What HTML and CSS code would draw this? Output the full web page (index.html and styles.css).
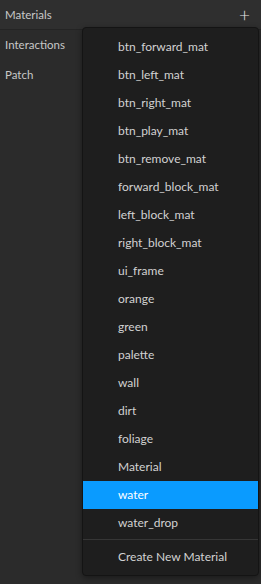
FILE: index.html
```html
<!DOCTYPE html>
<html lang="en">
<head>
    <meta charset="UTF-8">
    <title>Materials</title>
    <link rel="stylesheet" href="styles.css">
</head>
<body>
    <div class="panel">
        <div class="header">
            <span>Materials</span>
            <span class="add">+</span>
        </div>
        <div class="side">
            <div class="side-item">Interactions</div>
            <div class="side-item">Patch</div>
        </div>

        <ul class="menu">
            <li>btn_forward_mat</li>
            <li>btn_left_mat</li>
            <li>btn_right_mat</li>
            <li>btn_play_mat</li>
            <li>btn_remove_mat</li>
            <li>forward_block_mat</li>
            <li>left_block_mat</li>
            <li>right_block_mat</li>
            <li>ui_frame</li>
            <li>orange</li>
            <li>green</li>
            <li>palette</li>
            <li>wall</li>
            <li>dirt</li>
            <li>foliage</li>
            <li>Material</li>
            <li class="selected">water</li>
            <li>water_drop</li>
            <li class="sep"></li>
            <li>Create New Material</li>
        </ul>
    </div>
</body>
</html>
```

FILE: styles.css
```css
html, body {
    margin: 0;
    height: 100%;
}
body {
    background: #2b2b2b;
    font-family: Lato, "Noto Sans", sans-serif;
    font-size: 11.5px;
    color: #c8c8c8;
    overflow: hidden;
}
.panel {
    position: relative;
    height: 100%;
}
.header {
    display: flex;
    justify-content: space-between;
    align-items: center;
    height: 29px;
    padding: 0 11px 0 5px;
    background: #2f2f2f;
    border-bottom: 1px solid #242424;
}
.add {
    font-size: 19px;
    font-weight: 300;
    color: #e8e8e8;
}
.side-item {
    height: 30px;
    line-height: 30px;
    padding-left: 5px;
}
.menu {
    position: absolute;
    top: 27px;
    left: 82px;
    width: 175px;
    margin: 0;
    padding: 5px 0 4px;
    list-style: none;
    background: #1e1e1e;
    border: 1px solid #141414;
    border-radius: 4px;
    box-shadow: 0 2px 6px rgba(0,0,0,0.4);
    font-size: 12px;
    color: #d2d2d2;
}
.menu li {
    height: 28px;
    line-height: 28px;
    padding-left: 35px;
}
.menu li.selected {
    background: #0a9bff;
    color: #ffffff;
}
.menu li.sep {
    height: 0;
    margin: 2px 0 3px;
    border-top: 1px solid #363636;
}
```
